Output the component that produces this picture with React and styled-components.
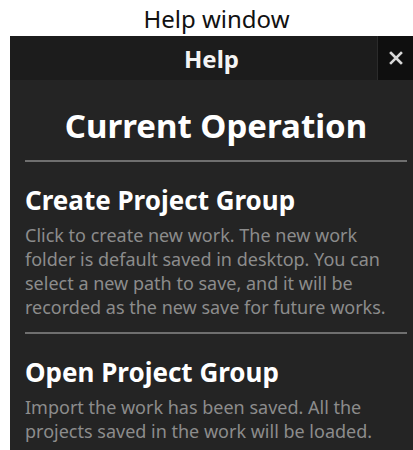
import React from "react";
import styled, { createGlobalStyle } from "styled-components";

const GlobalStyle = createGlobalStyle`
    html, body {
        margin: 0;
        padding: 0;
        background: #ffffff;
        font-family: "Noto Sans", "Open Sans", sans-serif;
    }
`;

const Page = styled.div`
    width: 413px;
    height: 450px;
    overflow: hidden;
`;

const Caption = styled.div`
    height: 36px;
    padding-left: 20px;
    text-align: center;
    font-size: 24px;
    line-height: 38px;
    color: #111;
`;

const Panel = styled.div`
    margin-left: 10px;
    background: #242424;
    min-height: 420px;
`;

const Header = styled.div`
    display: grid;
    grid-template-columns: 36px 1fr 36px;
    height: 44px;
    background: #1c1c1c;
`;

const HeaderTitle = styled.div`
    grid-column: 2;
    display: flex;
    align-items: center;
    justify-content: center;
    color: #f4f4f4;
    font-size: 24px;
    font-weight: 700;
`;

const CloseButton = styled.div`
    display: flex;
    align-items: center;
    justify-content: center;
    background: #0f0f0f;
    border-left: 1px solid #2b2b2b;
`;

const Content = styled.div`
    padding: 24px 6px 0 15px;
`;

const PageTitle = styled.h1`
    margin: 0;
    padding-bottom: 12px;
    text-align: center;
    font-size: 33px;
    line-height: 44px;
    font-weight: 700;
    color: #fff;
    border-bottom: 2px solid #6f6f6f;
`;

const Section = styled.div`
    padding: 21px 0 13px;
    border-bottom: ${(p) => (p.$last ? "none" : "2px solid #6f6f6f")};
`;

const SectionTitle = styled.h2`
    margin: 0 0 6px;
    font-size: 26px;
    line-height: 34px;
    font-weight: 700;
    color: #fff;
`;

const SectionText = styled.p`
    margin: 0;
    font-size: 18px;
    line-height: 24px;
    color: #8c8c8c;
`;

const CloseIcon = () => (
    <svg width="14" height="14" viewBox="0 0 14 14">
        <path d="M2 2 L12 12 M12 2 L2 12" stroke="#d8d8d8" strokeWidth="2.6" strokeLinecap="square" />
    </svg>
);

const sections = [
    {
        title: "Create Project Group",
        text: "Click to create new work. The new work folder is default saved in desktop. You can select a new path to save, and it will be recorded as the new save for future works.",
    },
    {
        title: "Open Project Group",
        text: "Import the work has been saved. All the projects saved in the work will be loaded.",
    },
];

const App = () => {
    return (
        <Page>
            <GlobalStyle />
            <Caption>Help window</Caption>
            <Panel>
                <Header>
                    <HeaderTitle>Help</HeaderTitle>
                    <CloseButton>
                        <CloseIcon />
                    </CloseButton>
                </Header>
                <Content>
                    <PageTitle>Current Operation</PageTitle>
                    {sections.map((s, i) => (
                        <Section key={s.title} $last={i === sections.length - 1}>
                            <SectionTitle>{s.title}</SectionTitle>
                            <SectionText>{s.text}</SectionText>
                        </Section>
                    ))}
                </Content>
            </Panel>
        </Page>
    );
};

export default App;
